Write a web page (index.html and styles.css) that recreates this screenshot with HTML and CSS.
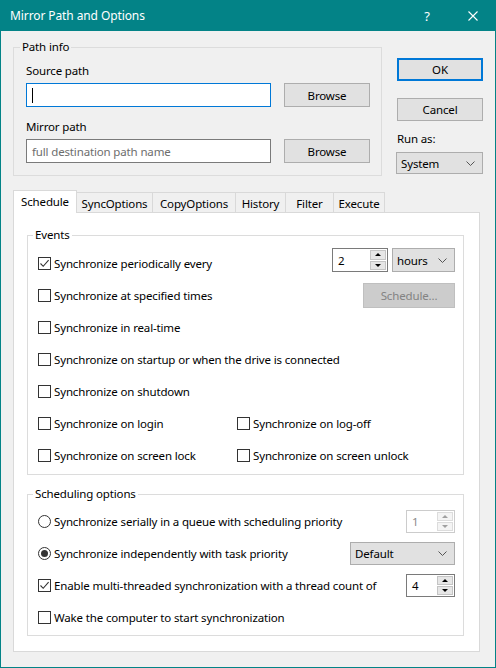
FILE: index.html
```html
<!DOCTYPE html>
<html>
<head>
<meta charset="utf-8">
<link rel="stylesheet" href="styles.css">
</head>
<body>
<div class="window">
  <div class="titlebar">
    <span class="title">Mirror Path and Options</span>
    <span class="tb-btn help">?</span>
    <span class="tb-btn close"><svg width="10" height="10" viewBox="0 0 10 10"><path d="M0.5 0.5 L9.5 9.5 M9.5 0.5 L0.5 9.5" stroke="#fff" stroke-width="1.1" fill="none"/></svg></span>
  </div>
  <div class="content">
    <div class="top">
      <fieldset class="group path">
        <legend>Path info</legend>
        <div class="lbl">Source path</div>
        <div class="field">
          <div class="input focus"><span class="caret"></span></div>
          <div class="btn browse">Browse</div>
        </div>
        <div class="lbl lbl2">Mirror path</div>
        <div class="field">
          <div class="input"><span class="ph">full destination path name</span></div>
          <div class="btn browse">Browse</div>
        </div>
      </fieldset>
      <div class="side">
        <div class="btn default">OK</div>
        <div class="btn cancel">Cancel</div>
        <div class="runas">Run as:</div>
        <div class="combo system"><span class="combo-text">System</span><svg class="chev" width="9" height="5" viewBox="0 0 9 5"><path d="M0.5 0.5 L4.5 4.5 L8.5 0.5" stroke="#555" fill="none"/></svg></div>
      </div>
    </div>
    <div class="tabs">
      <div class="tab sel t1">Schedule</div>
      <div class="tab t2">SyncOptions</div>
      <div class="tab t3">CopyOptions</div>
      <div class="tab t4">History</div>
      <div class="tab t5">Filter</div>
      <div class="tab t6">Execute</div>
    </div>
    <div class="panel">
      <fieldset class="group events">
        <legend>Events</legend>
        <div class="row">
          <span class="cb on"><svg width="11" height="11" viewBox="0 0 11 11"><path d="M1.5 5.5 L4.2 8.3 L9.6 2.2" stroke="#333" stroke-width="1.1" fill="none"/></svg></span>
          <span>Synchronize periodically every</span>
          <span class="right r1">
            <span class="spin s-every"><span class="spin-val">2</span><span class="spin-btns"><span class="sb"><i class="up"></i></span><span class="sb"><i class="dn"></i></span></span></span>
            <span class="combo hours"><span class="combo-text">hours</span><svg class="chev" width="9" height="5" viewBox="0 0 9 5"><path d="M0.5 0.5 L4.5 4.5 L8.5 0.5" stroke="#555" fill="none"/></svg></span>
          </span>
        </div>
        <div class="row">
          <span class="cb"></span><span>Synchronize at specified times</span>
          <span class="right"><span class="btn disabled sched">Schedule...</span></span>
        </div>
        <div class="row"><span class="cb"></span><span>Synchronize in real-time</span></div>
        <div class="row"><span class="cb"></span><span>Synchronize on startup or when the drive is connected</span></div>
        <div class="row"><span class="cb"></span><span>Synchronize on shutdown</span></div>
        <div class="row2">
          <div class="row"><span class="cb"></span><span>Synchronize on login</span></div>
          <div class="row"><span class="cb"></span><span>Synchronize on log-off</span></div>
        </div>
        <div class="row2">
          <div class="row"><span class="cb"></span><span>Synchronize on screen lock</span></div>
          <div class="row"><span class="cb"></span><span>Synchronize on screen unlock</span></div>
        </div>
      </fieldset>
      <fieldset class="group sched-opts">
        <legend>Scheduling options</legend>
        <div class="row">
          <span class="rb"></span><span>Synchronize serially in a queue with scheduling priority</span>
          <span class="right"><span class="spin s-small dis"><span class="spin-val">1</span><span class="spin-btns"><span class="sb"><i class="up"></i></span><span class="sb"><i class="dn"></i></span></span></span></span>
        </div>
        <div class="row">
          <span class="rb on"><i></i></span><span>Synchronize independently with task priority</span>
          <span class="right"><span class="combo prio"><span class="combo-text">Default</span><svg class="chev" width="9" height="5" viewBox="0 0 9 5"><path d="M0.5 0.5 L4.5 4.5 L8.5 0.5" stroke="#555" fill="none"/></svg></span></span>
        </div>
        <div class="row">
          <span class="cb on"><svg width="11" height="11" viewBox="0 0 11 11"><path d="M1.5 5.5 L4.2 8.3 L9.6 2.2" stroke="#333" stroke-width="1.1" fill="none"/></svg></span>
          <span>Enable multi-threaded synchronization with a thread count of</span>
          <span class="right"><span class="spin s-small"><span class="spin-val">4</span><span class="spin-btns"><span class="sb"><i class="up"></i></span><span class="sb"><i class="dn"></i></span></span></span></span>
        </div>
        <div class="row"><span class="cb"></span><span>Wake the computer to start synchronization</span></div>
      </fieldset>
    </div>
  </div>
</div>
</body>
</html>
```
FILE: styles.css
```css
* { box-sizing: border-box; }
body {
  margin: 0;
  font-family: "Noto Sans", "Open Sans", sans-serif;
  font-size: 11.5px;
  letter-spacing: -0.15px;
  color: #000;
}
.window {
  width: 496px;
  height: 668px;
  border: 1px solid #038387;
  border-top: 0;
  background: #f0f0f0;
  display: flex;
  flex-direction: column;
}
.titlebar {
  height: 31px;
  background: #038387;
  color: #fff;
  display: flex;
  align-items: center;
  padding-left: 9px;
  flex: none;
}
.title { flex: 1; font-size: 12px; letter-spacing: -0.1px; }
.tb-btn {
  width: 46px;
  height: 31px;
  display: flex;
  align-items: center;
  justify-content: center;
}
.help { font-size: 13px; }
.close { width: 45px; }

.content {
  padding: 8px 12px 0 12px;
  display: flex;
  flex-direction: column;
}
.top { display: flex; align-items: flex-start; }

.group {
  margin: 0;
  border: 1px solid #dcdcdc;
  min-width: 0;
}
.group legend {
  padding: 0 2px;
  margin-left: -5px;
  line-height: 16px;
}
.path {
  width: 369px;
  padding: 8px 11px 12px 12px;
}
.path legend { margin-left: -6px; }
.lbl { line-height: 16px; }
.lbl2 { margin-top: 12px; }
.field { display: flex; gap: 13px; margin-top: 4px; }
.input {
  width: 245px;
  height: 24px;
  border: 1px solid #7a7a7a;
  background: #fff;
  display: flex;
  align-items: center;
  padding-left: 5px;
}
.input.focus { border-color: #0078d7; }
.caret { width: 1px; height: 15px; background: #000; }
.ph { color: #6d6d6d; }

.btn {
  height: 24px;
  background: #e1e1e1;
  border: 1px solid #adadad;
  display: flex;
  align-items: center;
  justify-content: center;
}
.browse { width: 86px; }

.side {
  margin-left: 15px;
  width: 86px;
  padding-top: 19px;
  display: flex;
  flex-direction: column;
}
.btn.default { height: 23px; border: 2px solid #0078d7; }
.btn.cancel { height: 23px; margin-top: 17px; }
.runas { margin-top: 10px; line-height: 16px; }
.combo {
  display: flex;
  align-items: center;
  background: #e1e1e1;
  border: 1px solid #adadad;
  padding-left: 4px;
  padding-right: 7px;
}
.combo-text { flex: 1; }
.chev { flex: none; }
.system { margin-top: 5px; height: 22px; width: 87px; margin-left: -1px; }

.tabs {
  margin-top: 14px;
  margin-bottom: -1px;
  display: flex;
  align-items: flex-end;
  height: 23px;
  position: relative;
  z-index: 1;
}
.tab {
  height: 20px;
  margin-bottom: 1px;
  border: 1px solid #d9d9d9;
  border-bottom: 0;
  background: #f0f0f0;
  display: flex;
  align-items: center;
  justify-content: center;
  margin-left: -1px;
  padding-top: 1px;
}
.tab.sel {
  height: 23px;
  margin-bottom: 0;
  background: #fff;
  margin-left: 0;
  padding-top: 0;
  padding-bottom: 2px;
  position: relative;
  z-index: 2;
}
.t1 { width: 64px; }
.t2 { width: 77px; }
.t3 { width: 84px; }
.t4 { width: 51px; }
.t5 { width: 49px; }
.t6 { width: 52px; }

.panel {
  width: 467px;
  height: 440px;
  background: #fff;
  border: 1px solid #d9d9d9;
  padding: 14px 15px 0 13px;
}
.events { padding: 4px 8px 3px 10px; }
.sched-opts { margin-top: 11px; padding: 3px 8px 2px 10px; }

.row {
  height: 32px;
  display: flex;
  align-items: center;
}
.row2 {
  display: grid;
  grid-template-columns: 199px 1fr;
}
.cb {
  width: 13px;
  height: 13px;
  border: 1px solid #333;
  background: #fff;
  margin-right: 3px;
  flex: none;
  display: flex;
  align-items: center;
  justify-content: center;
}
.rb {
  width: 13px;
  height: 13px;
  border: 1px solid #333;
  border-radius: 50%;
  background: #fff;
  margin-right: 3px;
  flex: none;
  display: flex;
  align-items: center;
  justify-content: center;
}
.rb i {
  width: 7px;
  height: 7px;
  border-radius: 50%;
  background: #333;
}
.right {
  margin-left: auto;
  display: flex;
  gap: 4px;
}
.r1 { align-self: flex-start; margin-top: 1px; }

.spin {
  display: flex;
  border: 1px solid #7a7a7a;
  background: #fff;
  height: 24px;
}
.spin-val {
  flex: 1;
  padding-left: 5px;
  display: flex;
  align-items: center;
}
.spin-btns {
  width: 18px;
  display: flex;
  flex-direction: column;
  gap: 1px;
  padding: 1px;
}
.sb {
  flex: 1;
  background: #e6e6e6;
  border: 1px solid #c4c4c4;
  display: flex;
  align-items: center;
  justify-content: center;
}
.up {
  width: 0; height: 0;
  border-left: 3px solid transparent;
  border-right: 3px solid transparent;
  border-bottom: 3px solid #000;
}
.dn {
  width: 0; height: 0;
  border-left: 3px solid transparent;
  border-right: 3px solid transparent;
  border-top: 3px solid #000;
}
.s-every { width: 56px; }
.hours { width: 63px; height: 24px; }
.s-small { width: 49px; height: 23px; }
.spin.dis { border-color: #cccccc; }
.spin.dis .spin-val { color: #8a8a8a; }
.spin.dis .sb { background: #f4f4f4; border-color: #dcdcdc; }
.spin.dis .up { border-bottom-color: #a0a0a0; }
.spin.dis .dn { border-top-color: #a0a0a0; }
.prio { width: 105px; height: 23px; }

.btn.disabled {
  background: #cccccc;
  border-color: #bfbfbf;
  color: #838383;
}
.sched { width: 92px; height: 25px; }
```
